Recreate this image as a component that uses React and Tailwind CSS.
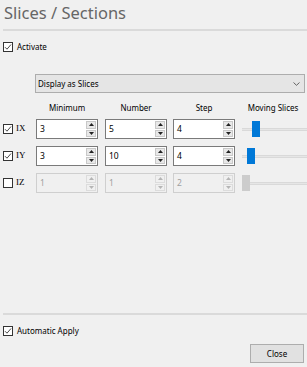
import React from "react";

const Check = ({ checked = true }) => (
  <span className="w-[10px] h-[10px] border border-[#333] bg-white flex items-center justify-center shrink-0">
    {checked && (
      <svg width="8" height="8" viewBox="0 0 8 8">
        <path d="M1 4.2 L3 6.2 L7 1.5" stroke="#333" strokeWidth="0.9" fill="none" />
      </svg>
    )}
  </span>
);

const Arrow = ({ up, disabled }) => (
  <svg width="5" height="3" viewBox="0 0 5 3">
    <path d={up ? "M0 3 L2.5 0 L5 3 Z" : "M0 0 L2.5 3 L5 0 Z"} fill={disabled ? "#b5b5b5" : "#222"} />
  </svg>
);

const Spin = ({ value, w, disabled }) => (
  <div
    className={`h-[20px] flex border ${
      disabled ? "border-[#cfcfcf] bg-[#f0f0f0]" : "border-[#7a7a7a] bg-white"
    } ${w}`}
  >
    <span className={`flex-1 pl-[3px] flex items-center text-[8.5px] ${disabled ? "text-[#a0a0a0]" : "text-black"}`}>
      {value}
    </span>
    <div className="w-[12px] flex flex-col gap-px p-px">
      <span className={`flex-1 flex items-center justify-center ${disabled ? "bg-[#f0f0f0] border border-[#dcdcdc]" : "bg-[#e8e8e8] border border-[#c8c8c8]"}`}>
        <Arrow up disabled={disabled} />
      </span>
      <span className={`flex-1 flex items-center justify-center ${disabled ? "bg-[#f0f0f0] border border-[#dcdcdc]" : "bg-[#e8e8e8] border border-[#c8c8c8]"}`}>
        <Arrow disabled={disabled} />
      </span>
    </div>
  </div>
);

const Slider = ({ offset, disabled }) => (
  <div className="flex-1 h-[20px] flex items-center relative ml-[7px]">
    <div className="w-full h-[3px] bg-[#e6e6e6] border-y border-[#d9d9d9]" />
    <div
      className={`absolute top-[2px] w-[8px] h-[16px] ${disabled ? "bg-[#cccccc]" : "bg-[#0078d7]"}`}
      style={{ left: offset }}
    />
  </div>
);

const rows = [
  { label: "IX", on: true, vals: ["3", "5", "4"], thumb: 10 },
  { label: "IY", on: true, vals: ["3", "10", "4"], thumb: 5 },
  { label: "IZ", on: false, vals: ["1", "1", "2"], thumb: 0, disabled: true },
];

export default function App() {
  return (
    <div className="w-[307px] h-[367px] bg-[#f0f0f0] flex flex-col text-black" style={{ fontFamily: '"Noto Sans", sans-serif' }}>
      <div className="pl-[4px] h-[29px] text-[16.5px] leading-[26px] text-[#666]">Slices / Sections</div>
      <div className="ml-[3px] h-[2px] bg-[#dadada]" />

      <label className="flex items-center gap-[4px] pl-[3px] mt-[11px] h-[10px] text-[8px]">
        <Check />
        <span>Activate</span>
      </label>

      <div className="ml-[35px] mr-[2px] mt-[22px] h-[19px] bg-[#e5e5e5] border border-[#adadad] flex items-center justify-between pl-[2px] pr-[4px] text-[8px]">
        <span>Display as Slices</span>
        <svg width="7" height="4" viewBox="0 0 7 4">
          <path d="M0.5 0.5 L3.5 3.3 L6.5 0.5" stroke="#555" strokeWidth="0.9" fill="none" />
        </svg>
      </div>

      <div className="flex mt-[8px] h-[14px] items-center text-[8px] pl-[36px]">
        <span className="w-[62px] text-center">Minimum</span>
        <span className="w-[62px] ml-[7px] text-center">Number</span>
        <span className="w-[62px] ml-[6px] text-center">Step</span>
        <span className="flex-1 text-center pl-[4px]">Moving Slices</span>
      </div>

      <div className="flex flex-col gap-[7px] mt-[4px]">
        {rows.map((r) => (
          <div key={r.label} className="flex items-center pl-[3px]">
            <div className="w-[33px] flex items-center gap-[3px]">
              <Check checked={r.on} />
              <span className="text-[9px]" style={{ fontFamily: '"Liberation Serif", serif' }}>
                {r.label}
              </span>
            </div>
            <Spin value={r.vals[0]} w="w-[62px]" disabled={r.disabled} />
            <div className="w-[7px]" />
            <Spin value={r.vals[1]} w="w-[62px]" disabled={r.disabled} />
            <div className="w-[6px]" />
            <Spin value={r.vals[2]} w="w-[62px]" disabled={r.disabled} />
            <Slider offset={r.thumb} disabled={r.disabled} />
          </div>
        ))}
      </div>

      <div className="flex-1" />
      <div className="ml-[3px] h-[2px] bg-[#dadada]" />

      <label className="flex items-center gap-[4px] pl-[3px] mt-[11px] h-[10px] text-[8px]">
        <Check />
        <span>Automatic Apply</span>
      </label>

      <div className="flex justify-end pr-[3px] mt-[8px] mb-[4px]">
        <button className="w-[54px] h-[19px] bg-[#e1e1e1] border border-[#adadad] text-[8px]">Close</button>
      </div>
    </div>
  );
}
